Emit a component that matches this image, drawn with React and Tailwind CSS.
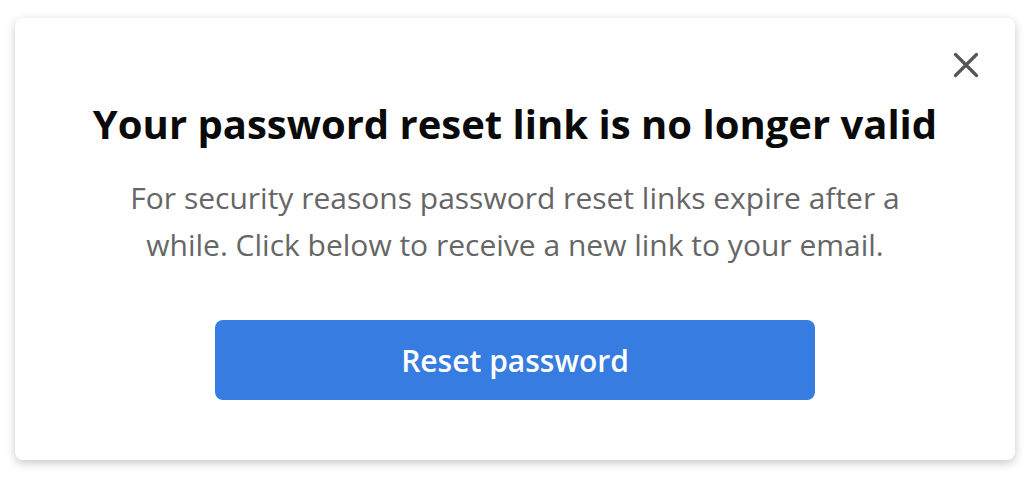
export default function App() {
  return (
    <div className="flex h-[477px] w-[1036px] items-start bg-white pl-[15px] pt-[18px] font-['Open_Sans',sans-serif]">
      <div className="relative flex h-[442px] w-[1000px] flex-col items-center rounded-lg bg-white shadow-[0_3px_10px_rgba(0,0,0,0.22)]">
        <button
          aria-label="Close"
          className="absolute right-[36px] top-[34px] text-[#555]"
          type="button"
        >
          <svg width="26" height="26" viewBox="0 0 26 26" fill="none" stroke="currentColor" strokeWidth="3.2" strokeLinecap="round" aria-hidden="true">
            <path d="M2.5 2.5L23.5 23.5M23.5 2.5L2.5 23.5" />
          </svg>
        </button>
        <h1 className="mt-[84px] text-[40px] font-bold leading-[44px] text-[#0a0a0a]">
          Your password reset link is no longer valid
        </h1>
        <p className="mt-[28px] w-[820px] text-center text-[30px] leading-[47px] text-[#666]">
          For security reasons password reset links expire after a while. Click below to receive a new link to your email.
        </p>
        <button
          className="mt-[52px] h-[80px] w-[600px] rounded-lg bg-[#377ce0] text-[30px] font-semibold text-white"
          type="button"
        >
          Reset password
        </button>
      </div>
    </div>
  );
}
